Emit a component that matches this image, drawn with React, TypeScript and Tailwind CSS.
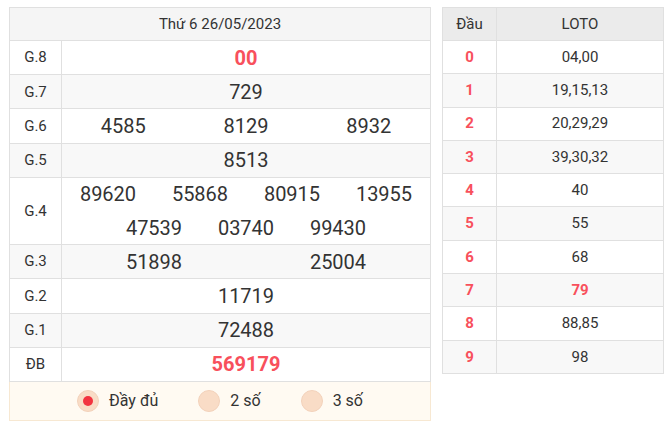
const rows: { label: string; lines: string[][]; red?: boolean; cols?: number }[] = [
	{ label: "G.8", lines: [["00"]], red: true },
	{ label: "G.7", lines: [["729"]] },
	{ label: "G.6", lines: [["4585", "8129", "8932"]] },
	{ label: "G.5", lines: [["8513"]] },
	{ label: "G.4", lines: [["89620", "55868", "80915", "13955"], ["47539", "03740", "99430"]], cols: 4 },
	{ label: "G.3", lines: [["51898", "25004"]] },
	{ label: "G.2", lines: [["11719"]] },
	{ label: "G.1", lines: [["72488"]] },
	{ label: "ĐB", lines: [["569179"]], red: true },
];

const loto = [
	"04,00",
	"19,15,13",
	"20,29,29",
	"39,30,32",
	"40",
	"55",
	"68",
	"79",
	"88,85",
	"98",
];

export default function App() {
	return (
		<div
			className="flex items-start gap-[11px] bg-white pl-[9px] pt-[7px] text-[#333]"
			style={{ fontFamily: "Roboto, 'Liberation Sans', sans-serif" }}
		>
			<div className="w-[422px]">
				<div className="border border-[#e0e0e0]">
					<div className="flex h-[32px] items-center justify-center bg-[#f5f5f5] text-[15px]">
						Thứ 6 26/05/2023
					</div>
					{rows.map((row, i) => (
						<div
							key={row.label}
							className={`flex border-t border-[#e0e0e0] ${i % 2 === 1 ? "bg-[#f8f8f8]" : "bg-white"}`}
						>
							<div className="flex w-[52px] shrink-0 items-center justify-center border-r border-[#e0e0e0] text-[15px]">
								{row.label}
							</div>
							<div className="flex-1">
								{row.lines.map((line, j) => (
									<div key={j} className="flex h-[33.2px] items-center justify-center">
										{line.map((n) => (
											<span
												key={n}
												className={`text-center text-[20px] ${row.red ? "font-bold text-[#f8505c]" : ""}`}
												style={{
													width: row.cols
														? `${100 / row.cols}%`
														: `${100 / line.length}%`,
												}}
											>
												{n}
											</span>
										))}
									</div>
								))}
							</div>
						</div>
					))}
				</div>
				<div className="flex h-[39px] items-center justify-center gap-[40px] border border-t-0 border-[#f7e8d2] bg-[#fffaf2] text-[16px]">
					<label className="flex items-center gap-[10px]">
						<span className="flex h-[22px] w-[22px] items-center justify-center rounded-full border border-[#f3d2bb] bg-[#f9dcc6]">
							<span className="h-[10px] w-[10px] rounded-full bg-[#f2333f]" />
						</span>
						Đầy đủ
					</label>
					<label className="flex items-center gap-[10px]">
						<span className="h-[22px] w-[22px] rounded-full border border-[#f3d2bb] bg-[#f9dcc6]" />
						2 số
					</label>
					<label className="flex items-center gap-[10px]">
						<span className="h-[22px] w-[22px] rounded-full border border-[#f3d2bb] bg-[#f9dcc6]" />
						3 số
					</label>
				</div>
			</div>

			<div className="w-[222px] border border-[#e0e0e0] text-[15px]">
				<div className="flex h-[32px] bg-[#ebebeb]">
					<div className="flex w-[54px] items-center justify-center border-r border-[#e0e0e0]">
						Đầu
					</div>
					<div className="flex flex-1 items-center justify-center">LOTO</div>
				</div>
				{loto.map((v, i) => (
					<div
						key={i}
						className={`flex h-[33.3px] border-t border-[#e0e0e0] ${i % 2 === 1 ? "bg-[#f8f8f8]" : "bg-white"}`}
					>
						<div className="flex w-[54px] items-center justify-center border-r border-[#e0e0e0] font-bold text-[#f8505c]">
							{i}
						</div>
						<div
							className={`flex flex-1 items-center justify-center ${i === 7 ? "font-bold text-[#f8505c]" : ""}`}
						>
							{v}
						</div>
					</div>
				))}
			</div>
		</div>
	);
}
